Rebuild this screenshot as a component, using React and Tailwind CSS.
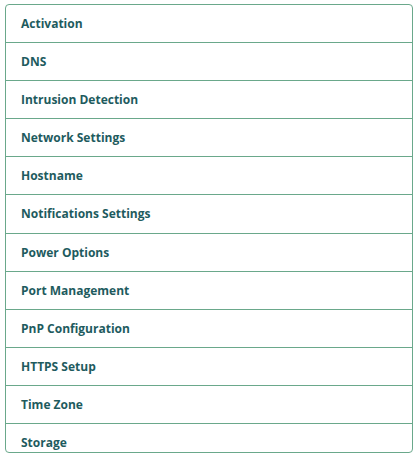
import React from "react";

const items = [
  ["Activation", "h-[38px]"],
  ["DNS", "h-[38px]"],
  ["Intrusion Detection", "h-[38px]"],
  ["Network Settings", "h-[38px]"],
  ["Hostname", "h-[38px]"],
  ["Notifications Settings", "h-[39px]"],
  ["Power Options", "h-[38px]"],
  ["Port Management", "h-[38px]"],
  ["PnP Configuration", "h-[38px]"],
  ["HTTPS Setup", "h-[38px]"],
  ["Time Zone", "h-[38px]"],
  ["Storage", "h-[38px]"],
];

export default function App() {
  return (
    <div className="w-[416px] h-[457px] bg-white pt-[4px] pl-[5px]" style={{ fontFamily: '"Open Sans", sans-serif' }}>
      <div className="w-[408px] h-[449px] border border-[#6aa88b] rounded-[4px] overflow-hidden bg-white">
        {items.map(([t, h]) => (
          <div
            key={t}
            className={`${h} box-border border-b border-[#6aa88b] flex items-center pl-[15px] text-[12px] font-bold text-[#1e5b5e]`}
          >
            {t}
          </div>
        ))}
      </div>
    </div>
  );
}
